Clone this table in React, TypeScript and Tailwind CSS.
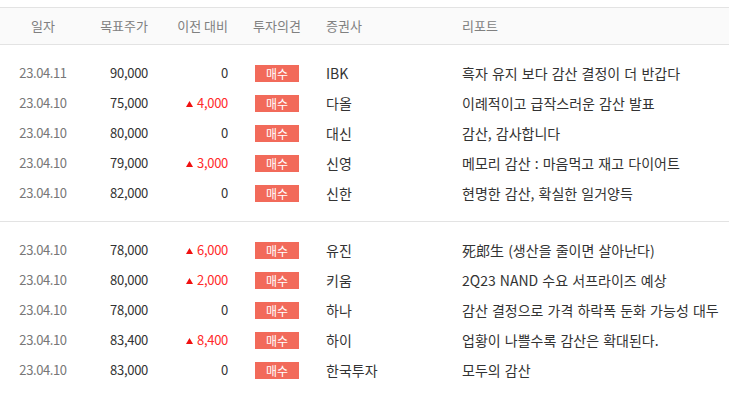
import React from 'react';

type Row = {
    date: string;
    target: string;
    diff: string;
    up: boolean;
    opinion: string;
    broker: string;
    title: string;
};

const GROUPS: Row[][] = [
    [
        { date: '23.04.11', target: '90,000', diff: '0', up: false, opinion: '매수', broker: 'IBK', title: '흑자 유지 보다 감산 결정이 더 반갑다' },
        { date: '23.04.10', target: '75,000', diff: '4,000', up: true, opinion: '매수', broker: '다올', title: '이례적이고 급작스러운 감산 발표' },
        { date: '23.04.10', target: '80,000', diff: '0', up: false, opinion: '매수', broker: '대신', title: '감산, 감사합니다' },
        { date: '23.04.10', target: '79,000', diff: '3,000', up: true, opinion: '매수', broker: '신영', title: '메모리 감산 : 마음먹고 재고 다이어트' },
        { date: '23.04.10', target: '82,000', diff: '0', up: false, opinion: '매수', broker: '신한', title: '현명한 감산, 확실한 일거양득' },
    ],
    [
        { date: '23.04.10', target: '78,000', diff: '6,000', up: true, opinion: '매수', broker: '유진', title: '死郎生 (생산을 줄이면 살아난다)' },
        { date: '23.04.10', target: '80,000', diff: '2,000', up: true, opinion: '매수', broker: '키움', title: '2Q23 NAND 수요 서프라이즈 예상' },
        { date: '23.04.10', target: '78,000', diff: '0', up: false, opinion: '매수', broker: '하나', title: '감산 결정으로 가격 하락폭 둔화 가능성 대두' },
        { date: '23.04.10', target: '83,400', diff: '8,400', up: true, opinion: '매수', broker: '하이', title: '업황이 나쁠수록 감산은 확대된다.' },
        { date: '23.04.10', target: '83,000', diff: '0', up: false, opinion: '매수', broker: '한국투자', title: '모두의 감산' },
    ],
];

const COLS = 'grid grid-cols-[86px_62px_80px_98px_136px_1fr] items-center';

function UpArrow() {
    return (
        <svg width="7" height="6" viewBox="0 0 7 6" className="inline-block mr-[4px] relative top-[-1px]">
            <path d="M3.5 0 L7 6 L0 6 Z" fill="#f01010" />
        </svg>
    );
}

export default function App() {
    return (
        <div className="w-[729px] h-[393px] bg-white overflow-hidden font-['Noto_Sans_CJK_KR','Noto_Sans',sans-serif] text-[13px]">
            <div className="h-[7px]" />
            {/* Header */}
            <div className={`${COLS} h-[38px] bg-[#fafafa] border-y border-[#e3e3e3] text-[#808080]`}>
                <div className="text-center">일자</div>
                <div className="text-right">목표주가</div>
                <div className="text-right">이전 대비</div>
                <div className="text-center">투자의견</div>
                <div>증권사</div>
                <div>리포트</div>
            </div>

            {GROUPS.map((group, gi) => (
                <div
                    key={gi}
                    className={gi > 0 ? 'border-t border-[#e3e3e3] py-[13px]' : 'py-[13px]'}
                >
                    {group.map((r, i) => (
                        <div key={i} className={`${COLS} h-[30px]`}>
                            <div className="text-center text-[#777] tracking-[-0.4px]">{r.date}</div>
                            <div className="text-right text-[#333] tracking-[-0.3px]">{r.target}</div>
                            <div
                                className={
                                    r.up
                                        ? 'text-right text-[#ff2a2a] tracking-[-0.3px]'
                                        : 'text-right text-[#333] tracking-[-0.3px]'
                                }
                            >
                                {r.up && <UpArrow />}
                                {r.diff}
                            </div>
                            <div className="flex justify-center">
                                <span className="w-[44px] h-[17px] bg-[#f26a5a] text-white text-[12px] leading-[17px] text-center">
                                    {r.opinion}
                                </span>
                            </div>
                            <div className="text-[#333] text-[14px]">{r.broker}</div>
                            <div className="text-[#333] text-[14px] [word-spacing:1px] whitespace-nowrap overflow-hidden">
                                {r.title}
                            </div>
                        </div>
                    ))}
                </div>
            ))}
        </div>
    );
}
